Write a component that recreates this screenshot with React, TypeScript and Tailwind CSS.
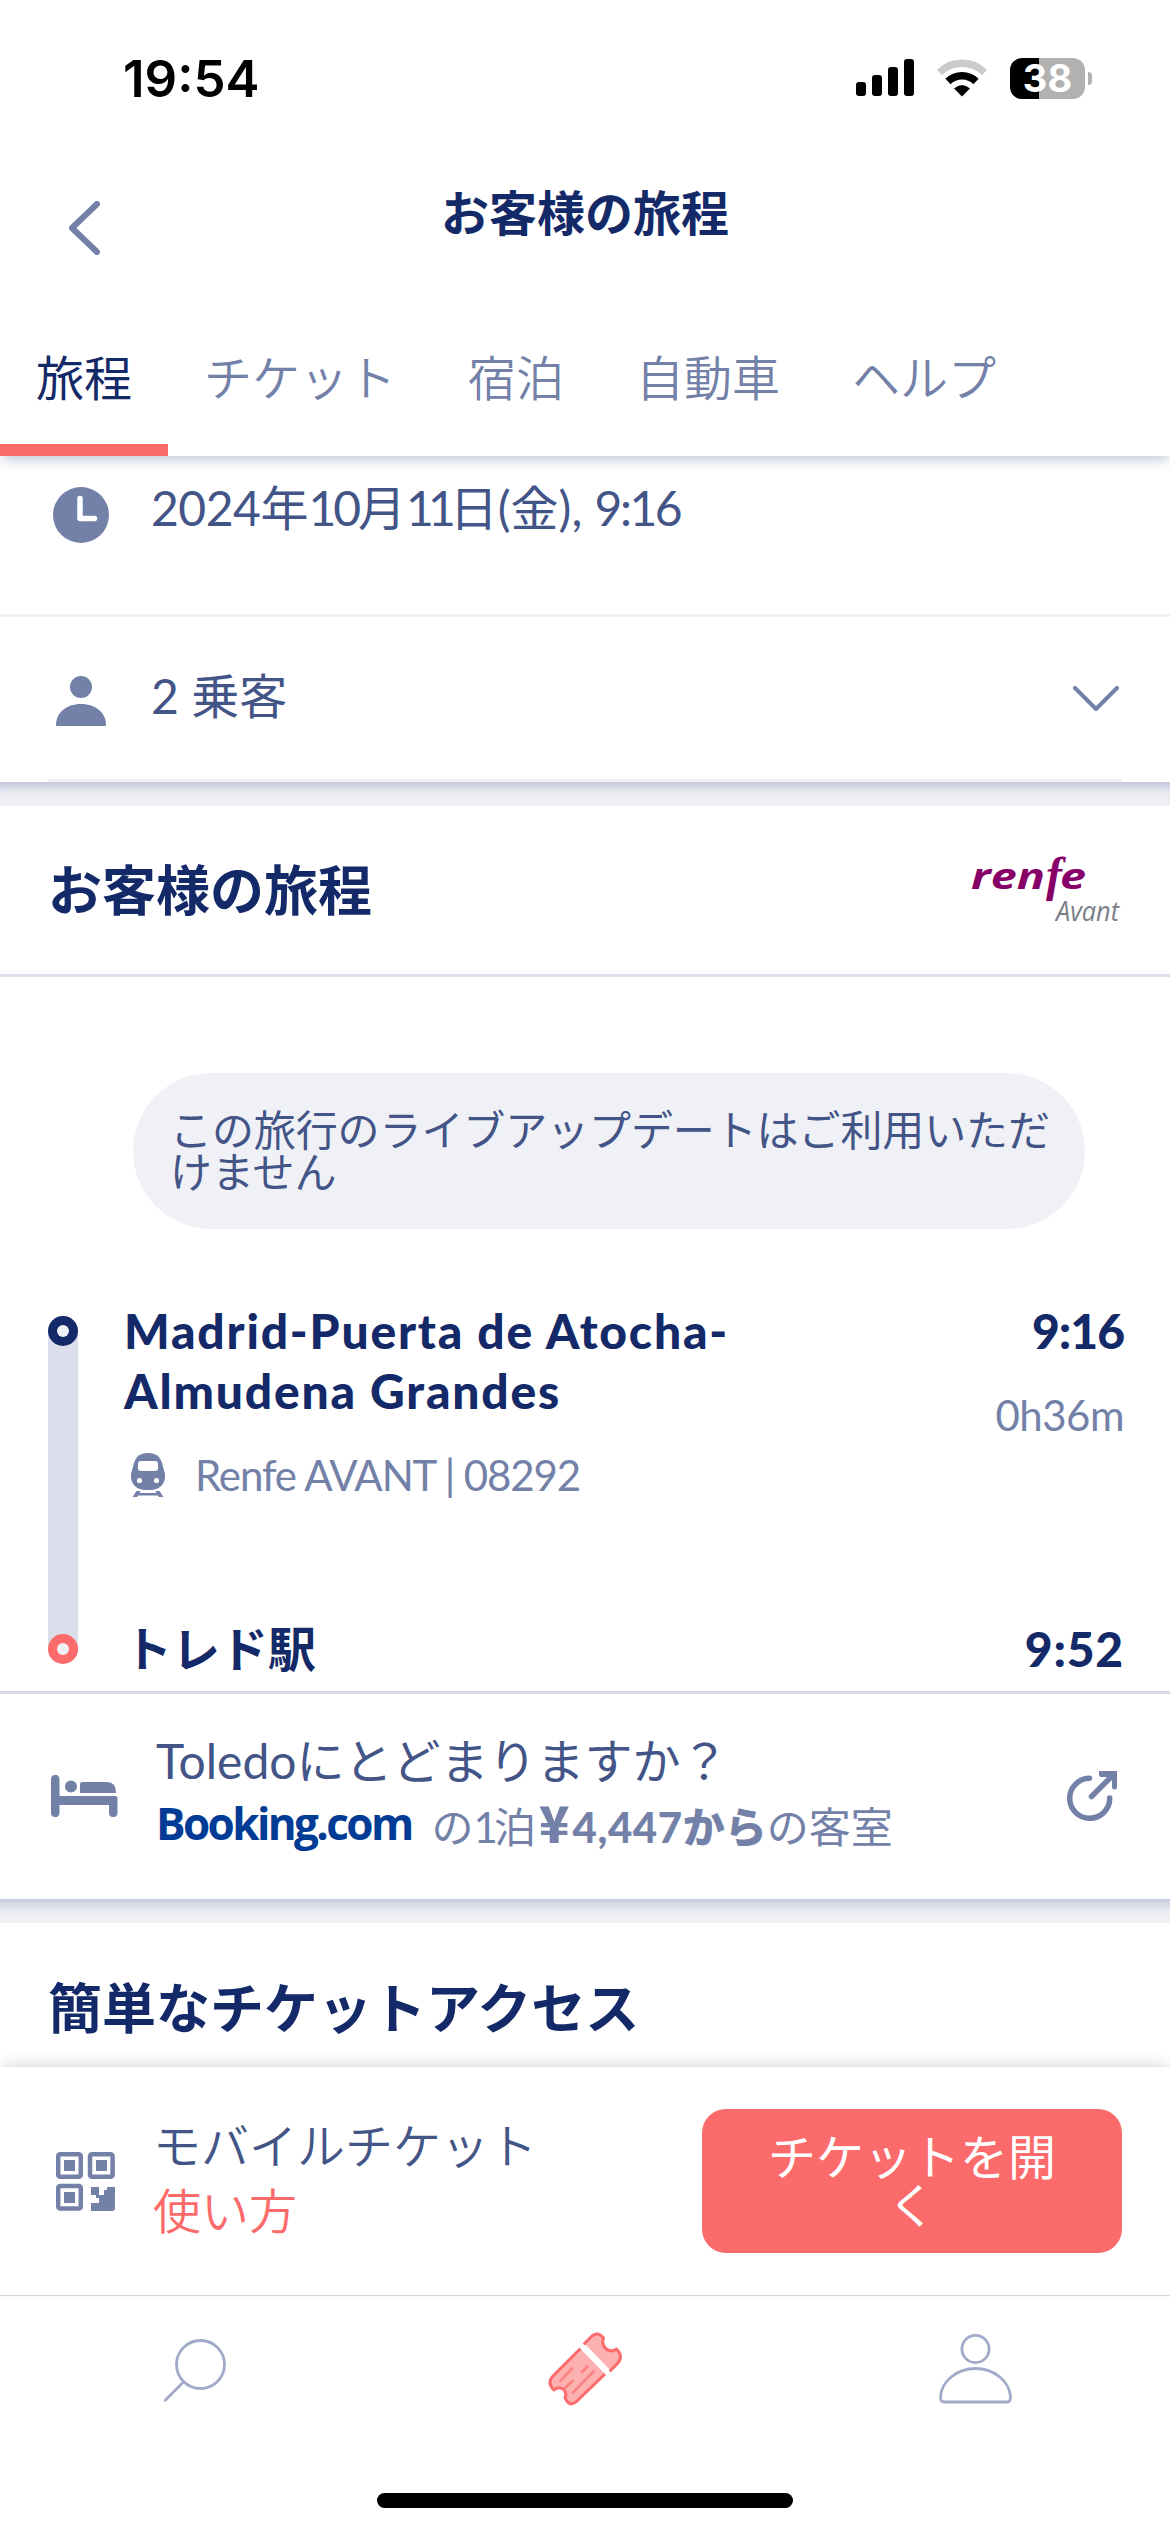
import type { ReactNode } from 'react';

interface Tab {
  label: string;
  active?: boolean;
}

const tabs: Tab[] = [
  { label: '旅程', active: true },
  { label: 'チケット' },
  { label: '宿泊' },
  { label: '自動車' },
  { label: 'ヘルプ' },
];

function SignalIcon() {
  return (
    <svg width="58" height="38" viewBox="0 0 58 38">
      <rect x="0" y="23" width="10" height="14" rx="3" />
      <rect x="16" y="16" width="10" height="21" rx="3" />
      <rect x="32" y="8" width="10" height="29" rx="3" />
      <rect x="48" y="0" width="10" height="37" rx="3" />
    </svg>
  );
}

function WifiIcon() {
  return (
    <svg width="52" height="38" viewBox="0 0 52 38" fill="none">
      <path d="M3.5 13.5A32 32 0 0 1 48.5 13.5" stroke="#cbcbcb" strokeWidth="7.5" />
      <path d="M12 22.5A20 20 0 0 1 40 22.5" stroke="#000" strokeWidth="7.5" />
      <path d="M26 37.5L18 29.5Q26 22.5 34 29.5Z" fill="#000" />
    </svg>
  );
}

function Battery() {
  return (
    <div className="flex items-center gap-[3px]">
      <div className="flex h-[41px] w-[75px] items-center justify-center rounded-[12px] bg-linear-to-r from-black from-[39%] to-[#b1b1b1] to-[39%] font-['Inter'] text-[38px] font-bold leading-none text-white">
        38
      </div>
      <div className="h-[13px] w-[4px] rounded-r-full bg-[#b1b1b1]" />
    </div>
  );
}

function ClockIcon() {
  return (
    <svg width="56" height="56" viewBox="0 0 56 56" fill="none">
      <circle cx="28" cy="28" r="28" fill="#7381a8" />
      <path d="M27 11.5V31.5H41.5" stroke="#fff" strokeWidth="5.5" strokeLinecap="round" strokeLinejoin="round" />
    </svg>
  );
}

function PersonIcon() {
  return (
    <svg width="50" height="50" viewBox="0 0 50 50" fill="#7381a8">
      <circle cx="25" cy="11" r="11" />
      <path d="M0 49C0 37 10 28 25 28s25 9 25 21q0 1-1 1H1q-1 0-1-1Z" />
    </svg>
  );
}

function TrainIcon() {
  return (
    <svg width="34" height="44" viewBox="0 0 34 44">
      <path d="M17 0C25 0 29 3.500 31 10L34 21C35 30 29 37 20 37H14C5 37-1 30 0 21L3 10C5 3.500 9 0 17 0Z" fill="#7381a8" />
      <rect x="7" y="8" width="20" height="10" rx="3" fill="#fff" />
      <circle cx="8.500" cy="27.500" r="2.600" fill="#fff" />
      <circle cx="25.500" cy="27.500" r="2.600" fill="#fff" />
      <path d="M5.500 38H9.500L8.500 40H25.500L24.500 38H28.500L32.500 44H28L27 42.500H7L6 44H1.500Z" fill="#7381a8" />
    </svg>
  );
}

function BedIcon() {
  return (
    <svg width="67" height="42" viewBox="0 0 67 42" fill="#7381a8">
      <path d="M0 4a4 4 0 0 1 8.500 0V21H64q2.500 0 2.500 2.500V38a4 4 0 0 1-8.500 0V30H8.500V38a4 4 0 0 1-8.500 0Z" />
      <circle cx="20" cy="11.500" r="6" />
      <path d="M29 9q0-2 2-2H56q9 0 9 11H29Z" />
    </svg>
  );
}

function ExternalIcon() {
  return (
    <svg width="50" height="50" viewBox="0 0 50 50" fill="none" stroke="#7381a8" strokeWidth="5.500" strokeLinecap="round">
      <path d="M22.500 7.300A20 20 0 1 0 42.700 27" />
      <path d="M24.500 25.500L44 6" />
      <path d="M32 0H50V16q0 2.500-2.500 2.500t-2.500-2.500V6H34Q32 6 32 3Z" fill="#7381a8" stroke="none" />
    </svg>
  );
}

function QrIcon() {
  return (
    <svg width="59" height="59" viewBox="0 0 59 59" fill="none" stroke="#7381a8" strokeWidth="4.500">
      <rect x="2.200" y="2.200" width="22.600" height="22.600" rx="2" />
      <rect x="34" y="2.200" width="22.600" height="22.600" rx="2" />
      <rect x="2.200" y="34" width="22.600" height="22.600" rx="2" />
      <g fill="#7381a8" stroke="none">
        <rect x="8" y="8" width="11" height="11" />
        <rect x="40" y="8" width="11" height="11" />
        <rect x="8" y="40" width="11" height="11" />
        <path d="M35 35h8v8h5v-5h3v-3h8v21q0 3-3 3H35v-8h8v-5h-3v-3h-5Z" />
      </g>
    </svg>
  );
}

function RenfeLogo() {
  return (
    <svg width="152" height="100" viewBox="0 -14 152 100">
      <g fill="#870067">
        <text x="0" y="34" className="font-['Open_Sans'] text-[35px] font-bold italic" textLength="74" lengthAdjust="spacingAndGlyphs">ren</text>
        <text x="75" y="36" className="font-['Liberation_Serif'] text-[48px] font-bold italic">f</text>
        <text x="89" y="34" className="font-['Open_Sans'] text-[35px] font-bold italic" textLength="26" lengthAdjust="spacingAndGlyphs">e</text>
      </g>
      <text x="85" y="66" fill="#7a7e86" className="font-['Open_Sans'] text-[27px] italic" textLength="63" lengthAdjust="spacingAndGlyphs">Avant</text>
    </svg>
  );
}

function SearchIcon() {
  return (
    <svg width="62" height="63" viewBox="0 0 62 63" fill="none" stroke="#a1abc9" strokeWidth="2.800">
      <circle cx="36.500" cy="25.500" r="24" />
      <path d="M19.500 43L1 61.500" strokeLinecap="round" />
    </svg>
  );
}

function TicketIcon() {
  return (
    <svg width="74" height="74" viewBox="0 0 74 74" fill="none" strokeLinejoin="round" strokeLinecap="round">
      <g fill="#fdb1b1" stroke="#fb6b6b" strokeWidth="3">
        <path d="M32.500 16.500L5 44Q-1.500 51 6 58Q10 54 15 57Q19.500 61 17 66Q22 76 29 69L57.500 41.500" />
        <path d="M36.500 11.500L44 4Q50 -1 55.500 6Q53 11 57.500 16.500Q63 21 68.500 17Q76 25 69 32L62.500 38.500" />
      </g>
      <path d="M32.500 13L60.500 42" stroke="#fff" strokeWidth="5" strokeLinecap="butt" />
      <path d="M24 36.500L12.500 49M39.500 34.500L34 40M24.500 49L17 56M45.500 39.500L25 60.500" stroke="#fb8585" strokeWidth="3" />
    </svg>
  );
}

function ProfileIcon() {
  return (
    <svg width="73" height="70" viewBox="0 0 73 70" fill="none" stroke="#a1abc9" strokeWidth="2.800">
      <circle cx="36.500" cy="15" r="13.600" />
      <path d="M5 68Q1.500 68 1.500 63C2.500 47 18 34.500 36.500 34.500S70.500 47 71.500 63Q71.500 68 68 68Z" />
    </svg>
  );
}

function SectionGap() {
  return <div className="h-[24px] shrink-0 bg-[#eff0f5] shadow-[inset_0_14px_12px_-9px_#bcc1d6]" />;
}

function SectionTitle({ children }: { children: ReactNode }) {
  return <h2 className="text-[54px] font-bold leading-[54px] text-[#132968]">{children}</h2>;
}

function Stop({ coral }: { coral?: boolean }) {
  return (
    <div className={`flex size-[30px] items-center justify-center rounded-full ${coral ? 'bg-[#fb6b6b]' : 'bg-[#132968]'}`}>
      <div className="size-[12px] rounded-full bg-[#f0f1f6]" />
    </div>
  );
}

export default function App() {
  return (
    <div className="flex h-[2532px] w-[1170px] flex-col overflow-hidden bg-white font-['Lato','Noto_Sans_CJK_JP',sans-serif] text-[#435487]">
      {/* Header */}
      <header className="relative z-10 flex h-[456px] shrink-0 flex-col bg-white shadow-[0_6px_12px_-2px_#c5cadb]">
        <div className="flex h-[156px] items-center justify-between pl-[123px] pr-[78px]">
          <span className="font-['Inter'] text-[51px] font-semibold leading-none text-black">19:54</span>
          <div className="flex items-center gap-[22px]">
            <SignalIcon />
            <WifiIcon />
            <Battery />
          </div>
        </div>
        <div className="grid h-[144px] grid-cols-[1fr_auto_1fr] px-[69px]">
          <svg className="mt-[45px]" width="31" height="54" viewBox="0 0 31 54" fill="none" stroke="#7381a8" strokeWidth="6" strokeLinecap="round" strokeLinejoin="round">
            <path d="M28 3L3 27L28 51" />
          </svg>
          <h1 className="mt-[33px] text-[48px] font-bold leading-[48px] text-[#132968]">お客様の旅程</h1>
        </div>
        <nav className="flex h-[156px]">
          {tabs.map(tab => (
            <div key={tab.label}
              className={`flex flex-col justify-end px-[36px] text-[48px] leading-[48px] ${tab.active ? 'border-b-[12px] border-[#fb6b6b] pb-[42px] text-[#132968]' : 'pb-[54px] font-[350] text-[#7381a8]'}`}>
              {tab.label}
            </div>
          ))}
        </nav>
      </header>

      {/* Booking summary */}
      <div className="flex h-[161px] shrink-0 gap-[42px] border-b-[3px] border-[#f0f1f6] pl-[53px] pt-[31px]">
        <ClockIcon />
        <p className="mt-[-3px] text-[48px] leading-[48px]">
          <span className="tracking-[-0.5px]">2024</span>年<span className="tracking-[-3px]">10</span>月<span className="tracking-[-6px]">11</span>日(金), <span className="tracking-[-2.5px]">9:16</span>
        </p>
      </div>
      <div className="flex h-[165px] shrink-0 flex-col justify-between px-[48px]">
        <div className="flex pl-[8px] pr-[3px] pt-[55px]">
          <div className="mt-[4px]"><PersonIcon /></div>
          <p className="ml-[45px] flex-1 text-[48px] leading-[48px]">2 乗客</p>
          <svg className="mt-[14px]" width="46" height="26" viewBox="0 0 46 26" fill="none" stroke="#7381a8" strokeWidth="4" strokeLinecap="round" strokeLinejoin="round">
            <path d="M2 2L23 23L44 2" />
          </svg>
        </div>
        <div className="h-[3px] bg-[#f0f1f6]" />
      </div>
      <SectionGap />

      {/* Journey */}
      <div className="flex h-[171px] shrink-0 items-center justify-between border-b-[3px] border-[#dcdfeb] pl-[48px] pr-[47px] pt-[2px]">
        <SectionTitle>お客様の旅程</SectionTitle>
        <RenfeLogo />
      </div>
      <div className="flex h-[717px] shrink-0 flex-col border-b-[3px] border-[#d5d9e5]">
        <div className="ml-[133px] mt-[96px] flex h-[156px] w-[952px] items-center rounded-full bg-[#f0f1f6] pl-[37px]">
          <p className="w-[884px] break-all text-[42px] leading-[42px] tracking-[-0.1px]">この旅行のライブアップデートはご利用いただけません</p>
        </div>
        <div className="mt-[87px] flex pl-[48px] pr-[46px]">
          <div className="flex h-[348px] w-[30px] flex-col justify-between rounded-full bg-[#dcdfeb]">
            <Stop />
            <Stop coral />
          </div>
          <div className="ml-[46px] flex-1">
            <p className="mt-[-15px] text-[48px] font-black leading-[60px] tracking-[1.8px] text-[#132968]">
              Madrid-Puerta de Atocha-<br />Almudena Grandes
            </p>
            <div className="mt-[32px] flex h-[44px] items-center pl-[7px] text-[42px] leading-[44px] text-[#7381a8]">
              <TrainIcon />
              <p className="ml-[30px] tracking-[-1.1px]">Renfe AVANT | 08292</p>
            </div>
            <p className="mt-[128px] text-[48px] font-bold leading-[48px] text-[#132968]">トレド駅</p>
          </div>
          <div className="flex flex-col items-end">
            <p className="mt-[-15px] text-[48px] font-black leading-[60px] tracking-[-1px] text-[#132968]">9:16</p>
            <p className="mt-[32px] text-[42px] leading-[44px] tracking-[-0.5px] text-[#7381a8]">0h36m</p>
            <p className="mt-[182px] text-[48px] font-black leading-[60px] tracking-[0.8px] text-[#132968]">9:52</p>
          </div>
        </div>
      </div>

      {/* Accommodation */}
      <div className="flex h-[205px] shrink-0 pl-[51px] pr-[53px]">
        <div className="mt-[81px]"><BedIcon /></div>
        <div className="ml-[38px] mt-[41px] flex-1">
          <p className="text-[48px] leading-[52px]">Toledoにとどまりますか？</p>
          <div className="mt-[9px] flex items-baseline text-[42px] leading-[52px] text-[#7381a8]">
            <span className="relative top-[-3px] mr-[20px] font-['Open_Sans'] text-[44px] font-bold tracking-[-2.6px] text-[#003b95]">Booking.com</span>
            <p>の<span className="tracking-[-4px]">1</span>泊<b className="font-black"><span className="mx-[3px] font-['Noto_Sans_CJK_JP'] text-[50px] leading-none">¥</span><span className="tracking-[0.6px]">4,447</span>から</b>の客室</p>
          </div>
        </div>
        <div className="mt-[77px]"><ExternalIcon /></div>
      </div>
      <SectionGap />

      {/* Ticket access */}
      <div className="flex h-[144px] shrink-0 items-end px-[48px] pb-[31px]">
        <SectionTitle>簡単なチケットアクセス</SectionTitle>
      </div>
      <div className="relative flex h-[228px] shrink-0 items-center bg-white pl-[56px] pr-[48px] shadow-[0_-4px_14px_-2px_#d8d8d8]">
        <QrIcon />
        <div className="ml-[38px] mt-[-6px] flex-1 text-[48px] font-[350] leading-[65px]">
          <p>モバイルチケット</p>
          <p className="text-[#fb6b6b]">使い方</p>
        </div>
        <button className="h-[144px] w-[420px] rounded-[24px] bg-[#fb6b6b] px-[66px] text-[48px] leading-[48px] text-white break-all">
          チケットを開く
        </button>
      </div>

      {/* Bottom navigation */}
      <nav className="flex h-[237px] shrink-0 flex-col items-center border-t border-[#d6d6d9] bg-white">
        <div className="grid w-full grid-cols-3 justify-items-center">
          <div className="mt-[43px]"><SearchIcon /></div>
          <div className="mt-[36px]"><TicketIcon /></div>
          <div className="mt-[38px]"><ProfileIcon /></div>
        </div>
        <div className="mt-[87px] h-[15px] w-[416px] rounded-full bg-black" />
      </nav>
    </div>
  );
}
